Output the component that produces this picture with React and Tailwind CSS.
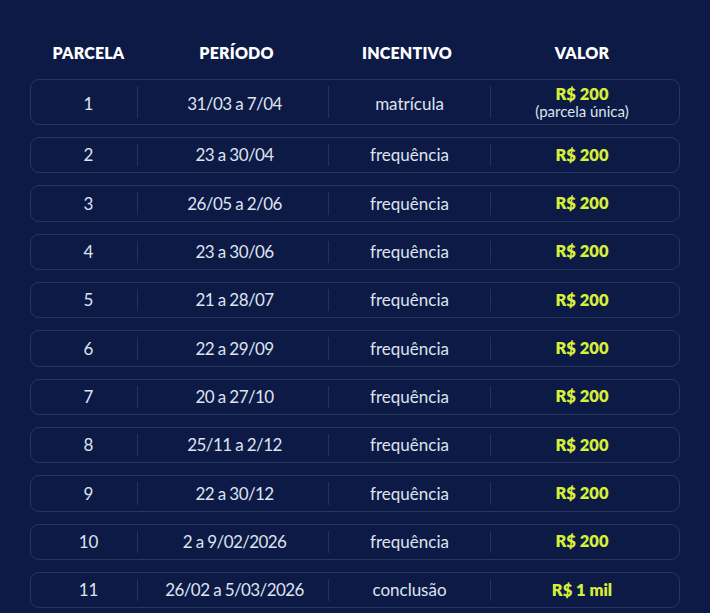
import React from "react";

const rows = [
  ["1", "31/03 a 7/04", "matrícula", "R$ 200", true],
  ["2", "23 a 30/04", "frequência", "R$ 200"],
  ["3", "26/05 a 2/06", "frequência", "R$ 200"],
  ["4", "23 a 30/06", "frequência", "R$ 200"],
  ["5", "21 a 28/07", "frequência", "R$ 200"],
  ["6", "22 a 29/09", "frequência", "R$ 200"],
  ["7", "20 a 27/10", "frequência", "R$ 200"],
  ["8", "25/11 a 2/12", "frequência", "R$ 200"],
  ["9", "22 a 30/12", "frequência", "R$ 200"],
  ["10", "2 a 9/02/2026", "frequência", "R$ 200"],
  ["11", "26/02 a 5/03/2026", "conclusão", "R$ 1 mil"],
];

function Divider() {
  return <div className="w-px self-stretch my-[6px] bg-[#233360]" />;
}

export default function App() {
  return (
    <div
      className="w-[710px] h-[613px] bg-[#0d1a45] overflow-hidden pt-[42px]"
      style={{ fontFamily: "Lato, 'Noto Sans', sans-serif" }}
    >
      <div className="mx-[30px] w-[650px]">
        <div className="flex h-[22px] items-center text-white font-extrabold text-[16px] tracking-[0.2px] px-px">
          <div className="w-[106px] pl-[9px] text-center">PARCELA</div>
          <div className="w-px" />
          <div className="w-[190px] pl-[7px] text-center">PERÍODO</div>
          <div className="w-px" />
          <div className="w-[161px] text-center pr-[5px]">INCENTIVO</div>
          <div className="w-px" />
          <div className="flex-1 text-center pr-[6px]">VALOR</div>
        </div>
        <div className="mt-[15px] flex flex-col gap-[12px]">
          {rows.map(([n, p, i, v, first]) => (
            <div
              key={n}
              className={`flex items-stretch rounded-[9px] border border-[#26365f] text-[#dfe3f0] text-[17px] ${first ? "h-[46px]" : "h-[36.33px]"}`}
            >
              <div className={`w-[106px] pl-[9px] flex items-center justify-center ${first ? "pt-[3px]" : ""}`}>{n}</div>
              <Divider />
              <div className={`w-[190px] pl-[3px] flex items-center justify-center tracking-[-0.6px] ${first ? "pt-[3px]" : ""}`}>{p}</div>
              <Divider />
              <div className={`w-[161px] flex items-center justify-center ${first ? "pt-[3px]" : ""}`}>{i}</div>
              <Divider />
              <div className="flex-1 pr-[6px] flex flex-col items-center justify-center">
                <span className="font-extrabold text-[#d5ef3a] text-[16.5px] leading-[17px]">{v}</span>
                {first && <span className="text-[15px] leading-[16px] text-[#dfe3f0]">(parcela única)</span>}
              </div>
            </div>
          ))}
        </div>
      </div>
    </div>
  );
}
